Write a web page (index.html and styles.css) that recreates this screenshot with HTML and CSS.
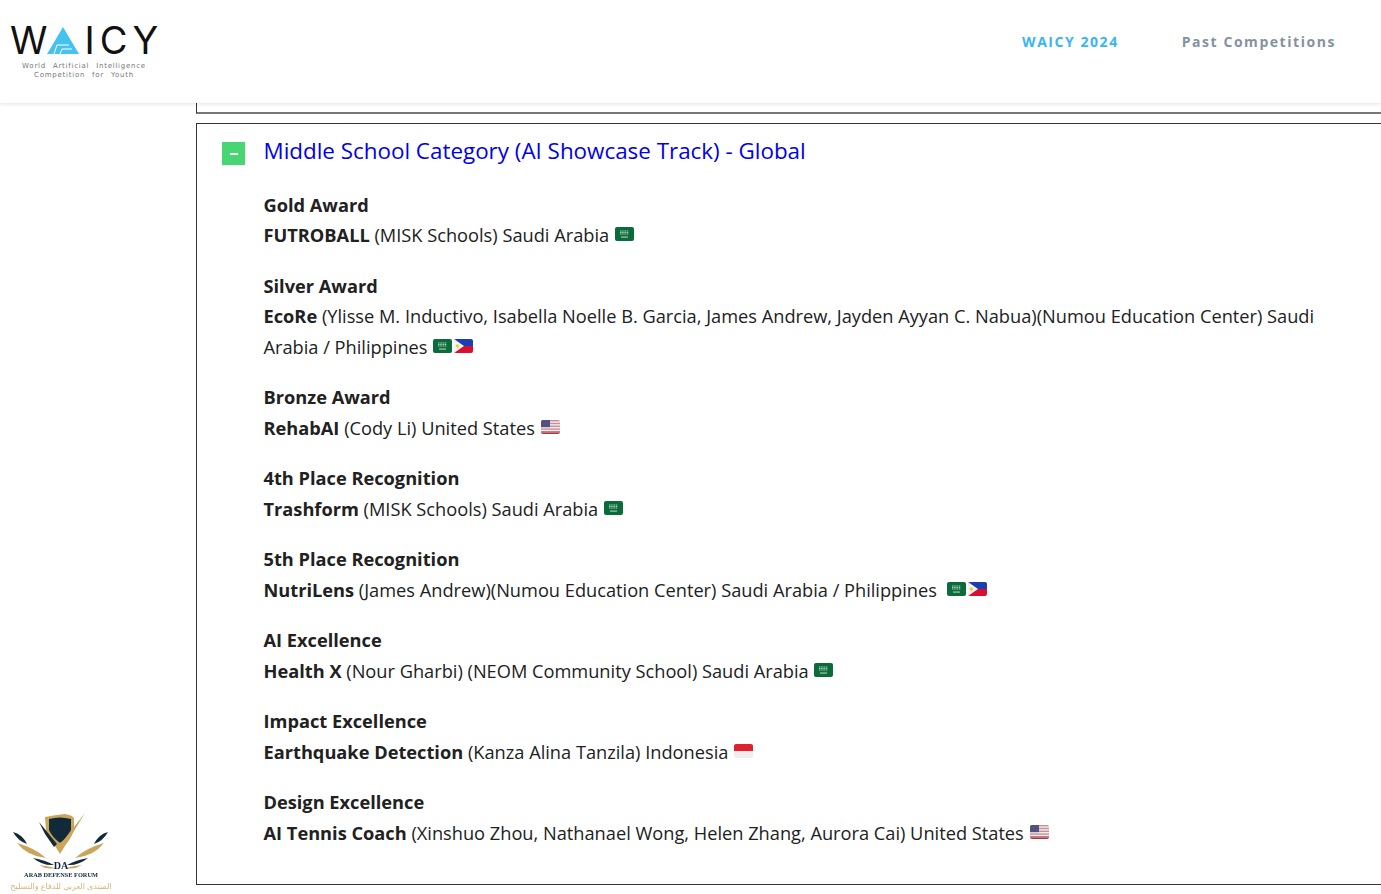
FILE: index.html
```html
<!DOCTYPE html>
<html lang="en">
<head>
  <meta charset="UTF-8">
  <meta name="viewport" content="width=device-width, initial-scale=1.0">
  <title>WAICY Winners</title>
  <link rel="stylesheet" href="styles.css">
</head>
<body>
  <svg class="flag-defs" width="0" height="0">
    <defs>
      <symbol id="flag-sa" viewBox="0 0 19 14">
        <rect width="19" height="14" fill="#0b6b3a"/>
        <path d="M5 4 H14 M5 5.5 H14 M5 7 H14" stroke="#a9d0b8" stroke-width="1" stroke-dasharray="1.5 0.7"/>
        <rect x="6" y="9.6" width="7" height="0.9" fill="#d5e8dc"/>
      </symbol>
      <symbol id="flag-ph" viewBox="0 0 19 14">
        <rect width="19" height="7" fill="#1a3fb0"/>
        <rect y="7" width="19" height="7" fill="#d80f2e"/>
        <polygon points="0,0 10,7 0,14" fill="#f4f4f4"/>
        <circle cx="3.4" cy="7" r="1.7" fill="#f5c93a"/>
      </symbol>
      <symbol id="flag-us" viewBox="0 0 19 14">
        <rect width="19" height="14" fill="#f2eeee"/>
        <rect y="0" width="19" height="1.4" fill="#c98f96"/>
        <rect y="2.8" width="19" height="1.4" fill="#c98f96"/>
        <rect y="5.6" width="19" height="1.4" fill="#c98f96"/>
        <rect y="8.4" width="19" height="1.4" fill="#c98f96"/>
        <rect y="11.2" width="19" height="1.4" fill="#b5626d"/>
        <rect y="12.6" width="19" height="1.4" fill="#a83844"/>
        <rect width="9" height="7.2" fill="#52527e"/>
      </symbol>
      <symbol id="flag-id" viewBox="0 0 19 14">
        <rect width="19" height="7" fill="#e2202c"/>
        <rect y="7" width="19" height="7" fill="#f0eeee"/>
      </symbol>
    </defs>
  </svg>

  <!-- top bar -->
  <header class="topbar">
    <a class="logo" href="#">
      <span class="logo-word">W<svg class="logo-tri" viewBox="0 0 32 28" width="32" height="28">
          <polygon points="16,0 32,27 0,27" fill="#45c3ee"/>
          <path d="M7 27 L10 18 L22 18 M13 27 L15 22 L25 22" stroke="#fff" stroke-width="1" fill="none"/>
        </svg><span class="logo-rest">ICY</span></span>
      <span class="logo-sub">World Artificial Intelligence</span>
      <span class="logo-sub">Competition for Youth</span>
    </a>
    <nav class="nav">
      <a class="nav-link active" href="#">WAICY 2024</a>
      <a class="nav-link" href="#">Past Competitions</a>
    </nav>
  </header>

  <main class="content">
    <div class="panel-prev"></div>

    <section class="panel">
      <h2 class="panel-title"><span class="toggle"><i class="toggle-bar"></i></span>Middle School Category (AI Showcase Track) - Global</h2>

      <div class="award">
        <p class="award-name">Gold Award</p>
        <p><b>FUTROBALL</b> (MISK Schools) Saudi Arabia <svg class="flag"><use href="#flag-sa"/></svg></p>
      </div>
      <div class="award">
        <p class="award-name">Silver Award</p>
        <p><b>EcoRe</b> (Ylisse M. Inductivo, Isabella Noelle B. Garcia, James Andrew, Jayden Ayyan C. Nabua)(Numou Education Center) Saudi Arabia / Philippines <svg class="flag"><use href="#flag-sa"/></svg><svg class="flag flag-next"><use href="#flag-ph"/></svg></p>
      </div>
      <div class="award">
        <p class="award-name">Bronze Award</p>
        <p><b>RehabAI</b> (Cody Li) United States <svg class="flag"><use href="#flag-us"/></svg></p>
      </div>
      <div class="award">
        <p class="award-name">4th Place Recognition</p>
        <p><b>Trashform</b> (MISK Schools) Saudi Arabia <svg class="flag"><use href="#flag-sa"/></svg></p>
      </div>
      <div class="award">
        <p class="award-name">5th Place Recognition</p>
        <p><b>NutriLens</b> (James Andrew)(Numou Education Center) Saudi Arabia / Philippines &nbsp;<svg class="flag"><use href="#flag-sa"/></svg><svg class="flag flag-next"><use href="#flag-ph"/></svg></p>
      </div>
      <div class="award">
        <p class="award-name">AI Excellence</p>
        <p><b>Health X</b> (Nour Gharbi) (NEOM Community School) Saudi Arabia <svg class="flag"><use href="#flag-sa"/></svg></p>
      </div>
      <div class="award">
        <p class="award-name">Impact Excellence</p>
        <p><b>Earthquake Detection</b> (Kanza Alina Tanzila) Indonesia <svg class="flag"><use href="#flag-id"/></svg></p>
      </div>
      <div class="award">
        <p class="award-name">Design Excellence</p>
        <p><b>AI Tennis Coach</b> (Xinshuo Zhou, Nathanael Wong, Helen Zhang, Aurora Cai) United States <svg class="flag"><use href="#flag-us"/></svg></p>
      </div>
    </section>
  </main>

  <!-- sponsor badge, floats over the page corner -->
  <a class="sponsor" href="#">
    <svg viewBox="0 0 108 60" width="108" height="60">
      <defs>
        <g id="wing">
          <path d="M6 22 Q11 31 20 34 Q15 24 6 22 Z" fill="#12293a"/>
          <path d="M10 33 Q20 46 39 48 Q28 38 10 33 Z" fill="#c9a65a"/>
          <path d="M26 48 Q36 56 47 55 Q38 50 26 48 Z" fill="#12293a"/>
          <path d="M32 55 Q40 60 48 58 Q40 56 32 55 Z" fill="#c9a65a"/>
        </g>
      </defs>
      <path d="M38 7 Q48 5 58 4 Q65 5 67 8 L67 20 Q63 32 53 40 Q41 30 39 20 Z" fill="#c9a65a"/>
      <path d="M42 9 Q53 6 64 9 L64 20 Q60 28 53 33 Q45 27 42 20 Z" fill="#12293a"/>
      <polygon points="48,36 53,44 78,3 56,31" fill="#c9a65a"/>
      <polygon points="32,12 50,34 47,37 38,24" fill="#12293a"/>
      <use href="#wing"/>
      <use href="#wing" transform="matrix(-1 0 0 1 107 0)"/>
      <text x="54" y="59" text-anchor="middle" class="sponsor-da">DA</text>
    </svg>
    <span class="sponsor-en">ARAB DEFENSE FORUM</span>
    <span class="sponsor-ar" dir="rtl">المنتدى العربي للدفاع والتسليح</span>
  </a>
</body>
</html>
```

FILE: styles.css
```css
html, body {
  height: 100%;
}
body {
  margin: 0;
  background-color: white;
  font-family: 'Open Sans', sans-serif;
  font-size: 18.235px;
  color: #212121;
  overflow: hidden;
}
a {
  text-decoration: none;
}
.flag-defs {
  display: block;
  position: absolute;
}

/* top bar */
.topbar {
  display: flex;
  justify-content: space-between;
  align-items: flex-start;
  height: 103px;
  box-sizing: border-box;
  background-color: white;
  box-shadow: 0 1px 4px rgba(0, 0, 0, 0.12);
  position: relative;
  z-index: 2;
}
.logo {
  display: flex;
  flex-direction: column;
  align-items: center;
  width: 148px;
  margin: 21px 0 0 10px;
  color: #111;
}
.logo-word {
  display: flex;
  align-self: flex-start;
  align-items: flex-end;
  height: 37px;
  font-family: 'Inter', sans-serif;
  font-weight: 400;
  font-size: 38px;
  line-height: 36px;
  white-space: nowrap;
}
.logo-tri {
  margin: 0 5px 3px 0;
}
.logo-rest {
  letter-spacing: 5px;
}
.logo-sub {
  font-family: 'DejaVu Sans', sans-serif;
  font-size: 7px;
  line-height: 9px;
  letter-spacing: 0.75px;
  word-spacing: 4px;
  color: #777;
}
.logo-word + .logo-sub {
  margin-top: 4px;
}
.nav {
  display: flex;
  gap: 63px;
  margin: 33px 45px 0 0;
}
.nav-link {
  font-size: 14px;
  line-height: 18px;
  font-weight: 700;
  letter-spacing: 1.55px;
  color: #8492a2;
}
.nav-link.active {
  color: #38b6f4;
}

/* results */
.content {
  margin-left: 196px;
  width: 1300px;
}
.panel-prev {
  height: 9px;
  border: 1px solid #333;
  border-top: 0;
  border-bottom: 2px solid #777;
}
.panel {
  margin-top: 9px;
  height: 762px;
  box-sizing: border-box;
  border: 1px solid #333;
  padding: 12px 0 0 66.5px;
}
.panel-title {
  position: relative;
  margin: 0 0 23.9px;
  font-size: 22.4px;
  line-height: 30px;
  font-weight: 400;
  color: #0000ee;
}
.toggle {
  position: absolute;
  left: -41.5px;
  top: 6px;
  width: 23px;
  height: 23px;
  display: flex;
  justify-content: center;
  align-items: center;
  background-color: #47d673;
}
.toggle-bar {
  width: 8px;
  height: 2px;
  background-color: white;
}
.award {
  margin-bottom: 20px;
  width: 1060px;
}
.award p {
  margin: 0;
  line-height: 30.5px;
}
.award-name,
.award b {
  font-weight: 700;
}
.flag {
  width: 19px;
  height: 14px;
  margin-left: 1px;
  vertical-align: 1px;
  border-radius: 2px;
}
.flag-next {
  margin-left: 2px;
}

/* corner badge */
.sponsor {
  position: fixed;
  left: 7px;
  bottom: 2px;
  width: 108px;
  display: flex;
  flex-direction: column;
  align-items: center;
}
.sponsor svg {
  display: block;
}
.sponsor-da {
  font-family: 'Liberation Serif', serif;
  font-weight: 700;
  font-size: 10px;
  fill: #12293a;
}
.sponsor-en {
  font-family: 'Liberation Serif', serif;
  font-weight: 700;
  font-size: 6.3px;
  line-height: 10px;
  color: #12293a;
  white-space: nowrap;
}
.sponsor-ar {
  font-family: 'Noto Sans', 'DejaVu Sans', sans-serif;
  font-size: 8px;
  line-height: 12px;
  color: #d7b676;
  white-space: nowrap;
}
```
